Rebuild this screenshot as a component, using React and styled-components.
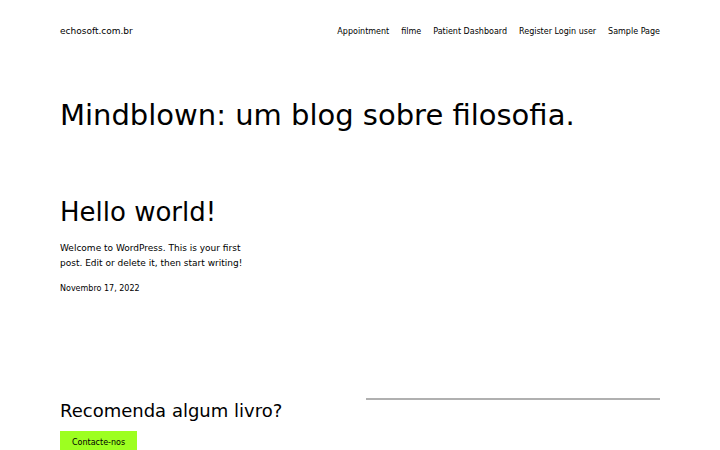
import React from "react";
import styled, { createGlobalStyle } from "styled-components";

const GlobalStyle = createGlobalStyle`
	html, body {
		margin: 0;
		padding: 0;
		background: #ffffff;
	}
	body {
		font-family: "DejaVu Sans", sans-serif;
		color: #000000;
	}
`;

const Page = styled.div`
	width: 600px;
	margin: 0 auto;
`;

const Header = styled.header`
	display: flex;
	justify-content: space-between;
	align-items: center;
	padding-top: 25px;
	height: 12px;
`;

const SiteTitle = styled.a`
	font-size: 9px;
	color: #000;
	text-decoration: none;
`;

const Nav = styled.nav`
	display: flex;
	gap: 12px;
`;

const NavLink = styled.a`
	font-size: 8px;
	color: #000;
	text-decoration: none;
`;

const BlogTitle = styled.h1`
	margin: 61px 0 0;
	font-size: 29px;
	font-weight: 400;
	line-height: 1.2;
`;

const PostGrid = styled.div`
	display: grid;
	grid-template-columns: repeat(3, 1fr);
	gap: 18px;
	margin-top: 64px;
`;

const Post = styled.article`
	display: flex;
	flex-direction: column;
`;

const PostTitle = styled.h2`
	margin: 0;
	font-size: 26px;
	font-weight: 400;
	line-height: 1.2;
`;

const Excerpt = styled.p`
	margin: 13px 0 0;
	font-size: 9px;
	line-height: 1.65;
`;

const PostDate = styled.time`
	margin-top: 13px;
	font-size: 8px;
`;

const Footer = styled.section`
	display: grid;
	grid-template-columns: 1fr 1fr;
	gap: 12px;
	margin-top: 105px;
`;

const FooterLeft = styled.div`
	display: flex;
	flex-direction: column;
	align-items: flex-start;
	padding-top: 2px;
`;

const FooterHeading = styled.h2`
	margin: 0;
	font-size: 18px;
	font-weight: 400;
	line-height: 1.2;
`;

const ContactButton = styled.a`
	margin-top: 10px;
	padding: 7px 12px;
	background: #9dff20;
	font-size: 8px;
	color: #000;
	text-decoration: none;
`;

const Separator = styled.hr`
	margin: 0;
	border: none;
	border-top: 2px solid #b0b0b0;
`;

const navItems = [
	"Appointment",
	"filme",
	"Patient Dashboard",
	"Register Login user",
	"Sample Page",
];

const App = () => {
	return (
		<>
			<GlobalStyle />
			<Page>
				<Header>
					<SiteTitle href="#">echosoft.com.br</SiteTitle>
					<Nav>
						{navItems.map((item) => (
							<NavLink key={item} href="#">
								{item}
							</NavLink>
						))}
					</Nav>
				</Header>
				<BlogTitle>Mindblown: um blog sobre filosofia.</BlogTitle>
				<PostGrid>
					<Post>
						<PostTitle>Hello world!</PostTitle>
						<Excerpt>
							Welcome to WordPress. This is your first post. Edit or delete it,
							then start writing!
						</Excerpt>
						<PostDate>Novembro 17, 2022</PostDate>
					</Post>
				</PostGrid>
				<Footer>
					<FooterLeft>
						<FooterHeading>Recomenda algum livro?</FooterHeading>
						<ContactButton href="#">Contacte-nos</ContactButton>
					</FooterLeft>
					<Separator />
				</Footer>
			</Page>
		</>
	);
};

export default App;
